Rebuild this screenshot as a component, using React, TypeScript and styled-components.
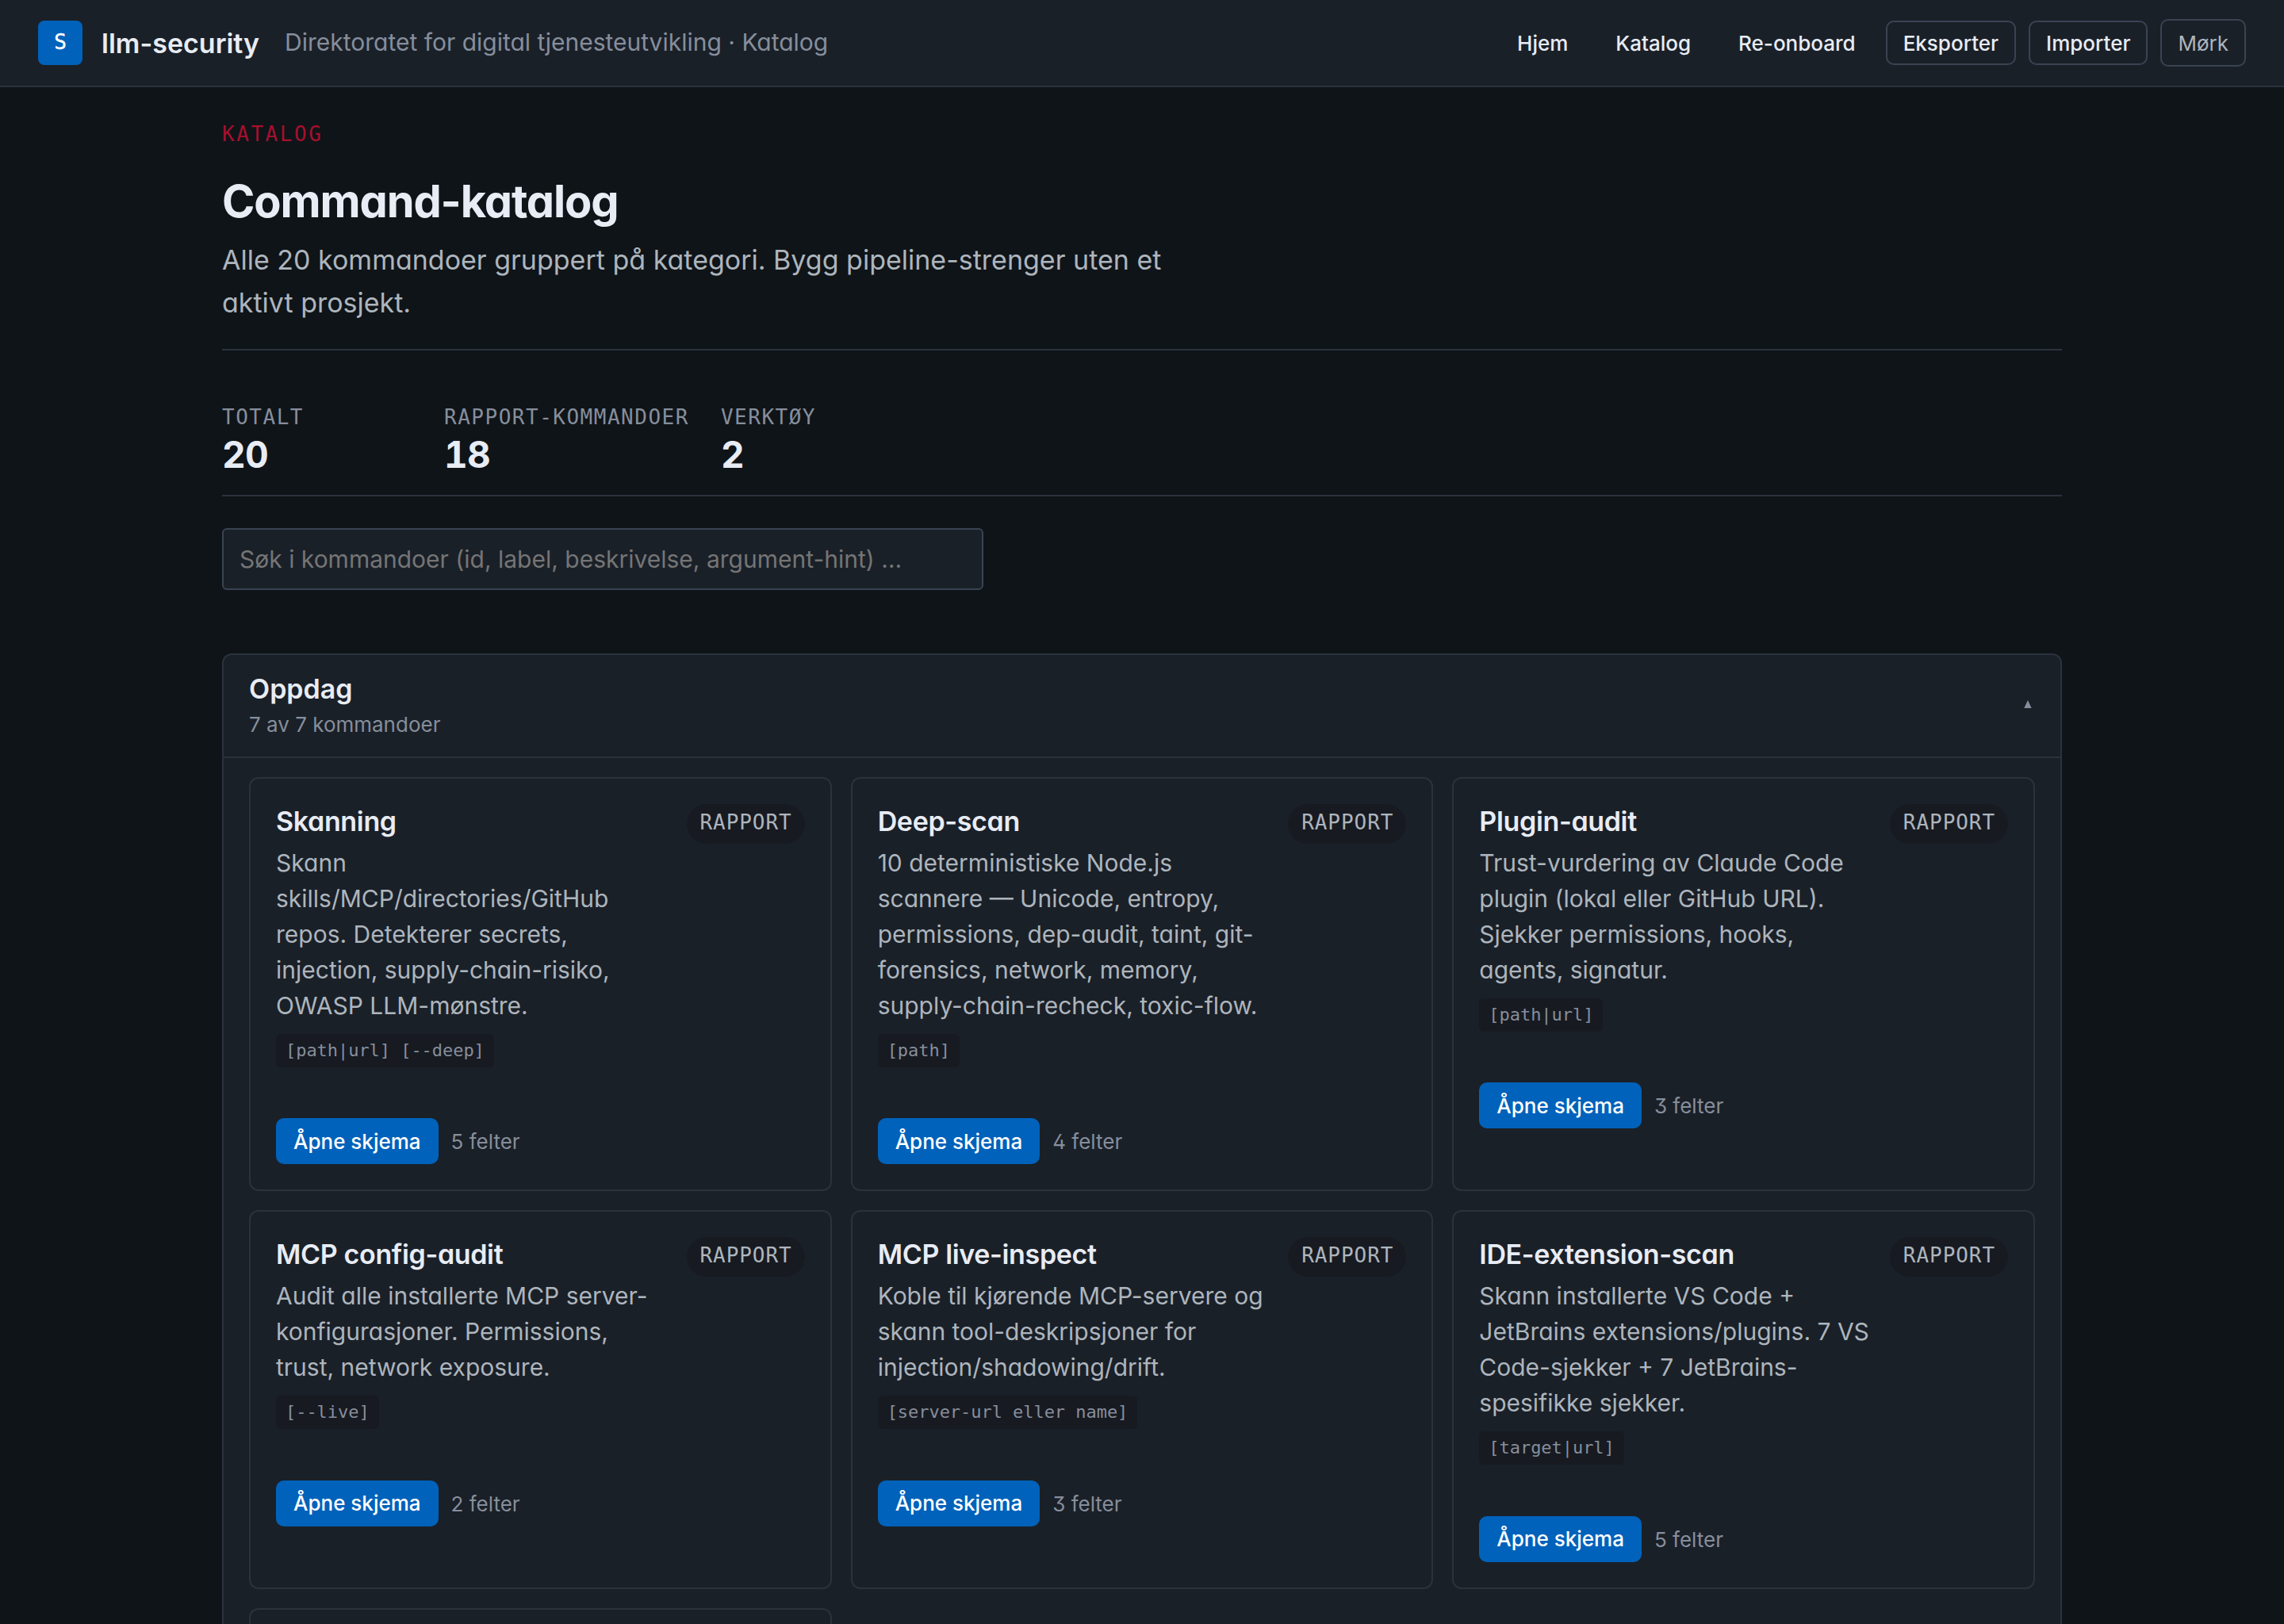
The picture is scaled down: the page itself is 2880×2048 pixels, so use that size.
import React from "react";
import styled, { createGlobalStyle } from "styled-components";

const sans = `Inter, "Liberation Sans", sans-serif`;
const mono = `"DejaVu Sans Mono", "Liberation Mono", monospace`;

const GlobalStyle = createGlobalStyle`
  * { box-sizing: border-box; }
  html { background: #0f1418; }
  body {
    margin: 0;
    height: 2048px;
    overflow: hidden;
    background: #0f1418;
    color: #e8ecf4;
    font-family: ${sans};
    font-size: 32px;
    line-height: 1.5;
    font-feature-settings: "cv11", "ss01";
    -webkit-font-smoothing: antialiased;
  }
  h1, h2, h3, p { margin: 0; }
`;

const TopBar = styled.header`
  display: flex;
  align-items: center;
  justify-content: space-between;
  height: 110px;
  padding: 0 48px;
  background: #1a2028;
  border-bottom: 2px solid #2a323c;
`;

const Brand = styled.div`
  display: flex;
  align-items: center;
  gap: 24px;
`;

const Logo = styled.div`
  display: grid;
  place-items: center;
  width: 56px;
  height: 56px;
  padding-bottom: 2px;
  border-radius: 8px;
  background: #0062ba;
  color: #fff;
  font: 400 26px/1 ${mono};
  -webkit-text-stroke: 0.4px #fff;
`;

const BrandName = styled.span`
  font-size: 34px;
  font-weight: 600;
`;

const Org = styled.span`
  margin: 0 0 2px 8px;
  font-size: 30px;
  color: #868e9c;
`;

const Nav = styled.nav`
  display: flex;
  align-items: center;
  gap: 16px;
`;

const Button = styled.button<{ $kind?: "ghost" | "outline" | "primary" }>`
  height: ${(p) => (p.$kind === "primary" ? 58 : 56)}px;
  padding: ${(p) => (p.$kind === "primary" ? 1 : 2)}px 20px 0;
  border: 2px solid
    ${(p) => (p.$kind === "outline" ? "#3a4352" : p.$kind === "primary" ? "#0062ba" : "transparent")};
  border-radius: 10px;
  background: ${(p) => (p.$kind === "primary" ? "#0062ba" : "transparent")};
  color: ${(p) => (p.$kind === "primary" ? "#fff" : "#e8ecf4")};
  font: 500 26px/1.4 ${sans};
`;

const ThemeButton = styled(Button)`
  height: 60px;
  color: #adb5bd;
  font-weight: 400;
`;

const Main = styled.main`
  width: 2320px;
  margin: 0 auto;
  padding-top: 38px;
`;

const PageHead = styled.div`
  height: 294px;
  border-bottom: 2px solid #2a323c;
`;

const Eyebrow = styled.div`
  font: 400 26px/42px ${mono};
  letter-spacing: 0.098em;
  color: #a5102e;
`;

const Title = styled.h1`
  margin-top: 31px;
  font-size: 56px;
  font-weight: 700;
  line-height: 66px;
  letter-spacing: -0.02em;
`;

const Lead = styled.p`
  max-width: 1216px;
  margin-top: 14px;
  font-size: 34px;
  line-height: 54px;
  color: #adb5bd;
`;

const Stats = styled.dl`
  display: flex;
  gap: 40px;
  height: 184px;
  margin: 0;
  padding-top: 63px;
  border-bottom: 2px solid #2a323c;
`;

const Stat = styled.div`
  min-width: 240px;
`;

const StatLabel = styled.dt`
  font: 400 26px/42px ${mono};
  letter-spacing: 0.058em;
  color: #868e9c;
`;

const StatValue = styled.dd`
  margin: 0;
  font-size: 46px;
  font-weight: 700;
  line-height: 52px;
  letter-spacing: -0.015em;
  font-variant-numeric: tabular-nums;
`;

const Search = styled.input`
  display: block;
  width: 960px;
  height: 78px;
  margin-top: 40px;
  padding: 0 20px;
  border: 2px solid #3a4352;
  border-radius: 6px;
  background: #1a2028;
  font: 400 30px/1.5 ${sans};
  &::placeholder { color: #757575; }
`;

const Panel = styled.section`
  margin-top: 80px;
  border: 2px solid #2a323c;
  border-radius: 12px;
  background: #1a2028;
`;

const PanelHead = styled.div`
  display: flex;
  align-items: center;
  justify-content: space-between;
  height: 130px;
  padding: 0 36px 0 32px;
  border-bottom: 2px solid #2a323c;
  font-feature-settings: normal;
`;

const PanelTitle = styled.h2`
  margin-bottom: 2px;
  font-size: 34px;
  font-weight: 600;
  line-height: 46px;
`;

const Muted = styled.span`
  display: block;
  font-size: 26px;
  line-height: 40px;
  color: #868e9c;
`;

const Caret = styled.svg`
  width: 10px;
  height: 10px;
  margin-bottom: 4px;
  fill: #868e9c;
`;

const Grid = styled.div`
  display: grid;
  grid-template-columns: repeat(3, 1fr);
  gap: 24px;
  padding: 24px 32px;
`;

const Card = styled.article`
  padding: 32px;
  border: 2px solid #2a323c;
  border-radius: 12px;
`;

const CardTop = styled.div`
  display: flex;
  align-items: flex-start;
  justify-content: space-between;
  gap: 24px;
`;

const CardTitle = styled.h3`
  font-size: 34px;
  font-weight: 600;
  line-height: 44px;
  letter-spacing: -0.01em;
`;

const Description = styled.p`
  margin-top: 8px;
  font-size: 30px;
  line-height: 45px;
  color: #adb5bd;
`;

const Hint = styled.code`
  display: inline-block;
  margin-top: 13px;
  padding: 0 12px;
  border-radius: 6px;
  background: #171a21;
  color: #868e9c;
  font: 400 22px/42px ${mono};
  letter-spacing: -0.002em;
  vertical-align: top;
`;

const Badge = styled.span`
  flex: none;
  height: 50px;
  padding: 0 16px 0 17px;
  border-radius: 25px;
  background: #171a21;
  color: #adb5bd;
  font: 400 26px/46px ${mono};
  letter-spacing: 0.036em;
`;

const Actions = styled.div`
  display: flex;
  align-items: center;
  gap: 16px;
  margin-top: 64.4px;
`;

const FieldCount = styled(Muted)`
  padding-top: 2px;
`;

interface Command {
  title: string;
  text: string;
  hint: string;
  fields: number;
}

const commands: Command[] = [
  { title: "Skanning", text: "Skann skills/MCP/directories/GitHub repos. Detekterer secrets, injection, supply-chain-risiko, OWASP LLM-mønstre.", hint: "[path|url] [--deep]", fields: 5 },
  { title: "Deep-scan", text: "10 deterministiske Node.js scannere — Unicode, entropy, permissions, dep-audit, taint, git-forensics, network, memory, supply-chain-recheck, toxic-flow.", hint: "[path]", fields: 4 },
  { title: "Plugin-audit", text: "Trust-vurdering av Claude Code plugin (lokal eller GitHub URL). Sjekker permissions, hooks, agents, signatur.", hint: "[path|url]", fields: 3 },
  { title: "MCP config-audit", text: "Audit alle installerte MCP server-konfigurasjoner. Permissions, trust, network exposure.", hint: "[--live]", fields: 2 },
  { title: "MCP live-inspect", text: "Koble til kjørende MCP-servere og skann tool-deskripsjoner for injection/shadowing/drift.", hint: "[server-url eller name]", fields: 3 },
  { title: "IDE-extension-scan", text: "Skann installerte VS Code + JetBrains extensions/plugins. 7 VS Code-sjekker + 7 JetBrains-spesifikke sjekker.", hint: "[target|url]", fields: 5 },
];

const stats = [
  { label: "TOTALT", value: 20 },
  { label: "RAPPORT-KOMMANDOER", value: 18 },
  { label: "VERKTØY", value: 2 },
];

export default function App() {
  return (
    <>
      <GlobalStyle />
      <TopBar>
        <Brand>
          <Logo>S</Logo>
          <BrandName>llm-security</BrandName>
          <Org>Direktoratet for digital tjenesteutvikling · Katalog</Org>
        </Brand>
        <Nav>
          <Button>Hjem</Button>
          <Button>Katalog</Button>
          <Button>Re-onboard</Button>
          <Button $kind="outline">Eksporter</Button>
          <Button $kind="outline">Importer</Button>
          <ThemeButton $kind="outline">Mørk</ThemeButton>
        </Nav>
      </TopBar>
      <Main>
        <PageHead>
          <Eyebrow>KATALOG</Eyebrow>
          <Title>Command-katalog</Title>
          <Lead>Alle 20 kommandoer gruppert på kategori. Bygg pipeline-strenger uten et aktivt prosjekt.</Lead>
        </PageHead>
        <Stats>
          {stats.map((s) => (
            <Stat key={s.label}>
              <StatLabel>{s.label}</StatLabel>
              <StatValue>{s.value}</StatValue>
            </Stat>
          ))}
        </Stats>
        <Search placeholder="Søk i kommandoer (id, label, beskrivelse, argument-hint) …" />
        <Panel>
          <PanelHead>
            <div>
              <PanelTitle>Oppdag</PanelTitle>
              <Muted>7 av 7 kommandoer</Muted>
            </div>
            <Caret viewBox="0 0 10 10">
              <path d="M5 0 9.7 10H.3Z" />
            </Caret>
          </PanelHead>
          <Grid>
            {commands.map((c) => (
              <Card key={c.title}>
                <CardTop>
                  <div>
                    <CardTitle>{c.title}</CardTitle>
                    <Description>{c.text}</Description>
                    <Hint>{c.hint}</Hint>
                  </div>
                  <Badge>RAPPORT</Badge>
                </CardTop>
                <Actions>
                  <Button $kind="primary">Åpne skjema</Button>
                  <FieldCount>{c.fields} felter</FieldCount>
                </Actions>
              </Card>
            ))}
            <Card />
          </Grid>
        </Panel>
      </Main>
    </>
  );
}
